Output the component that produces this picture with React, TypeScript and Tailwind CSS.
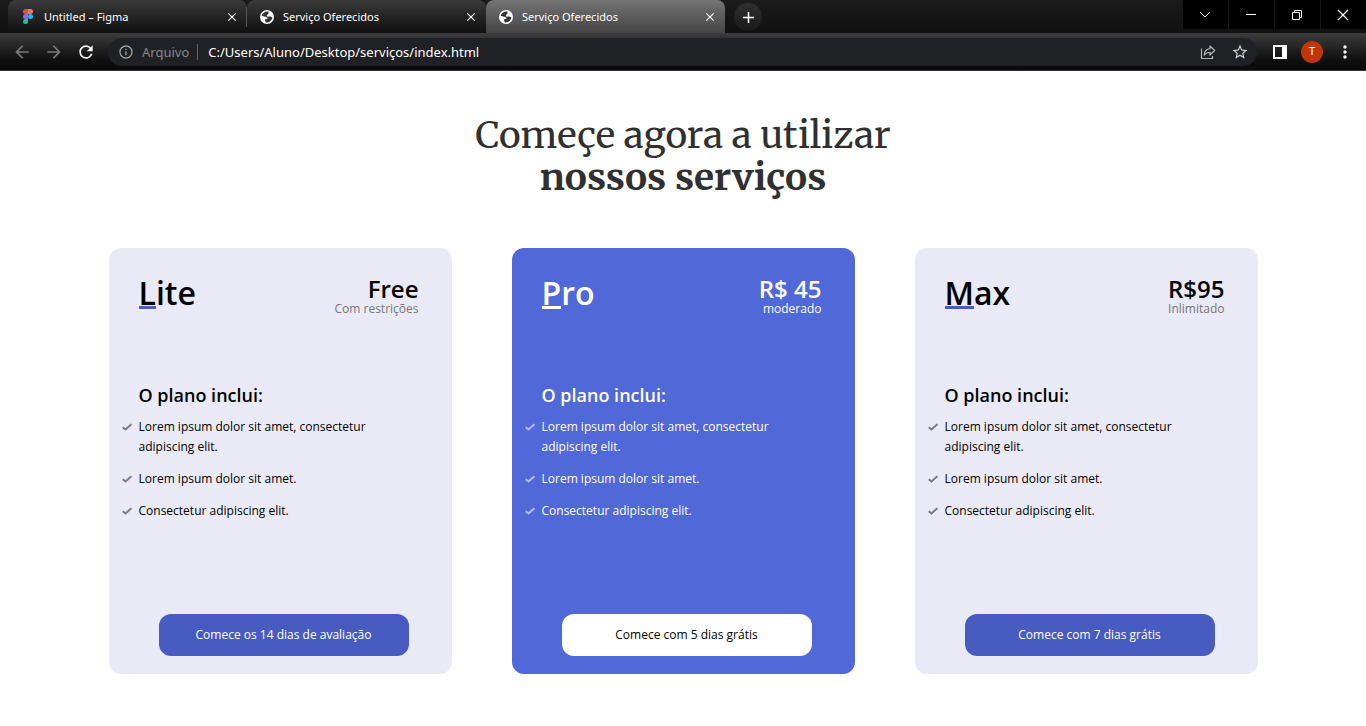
import { MdArrowBack, MdArrowForward, MdRefresh, MdInfoOutline, MdStarBorder, MdMoreVert, MdClose, MdAdd } from "react-icons/md";
import type { ReactNode } from "react";

function FigmaLogo() {
  return (
    <svg viewBox="0 0 20 30" className="h-[15px] w-[10px]" aria-hidden="true">
      <path d="M5 0h5v10H5A5 5 0 0 1 5 0z" fill="#f24e1e" />
      <path d="M10 0h5a5 5 0 0 1 0 10h-5z" fill="#ff7262" />
      <path d="M5 10h5v10H5a5 5 0 0 1 0-10z" fill="#a259ff" />
      <circle cx="15" cy="15" r="5" fill="#1abcfe" />
      <path d="M5 20h5v5a5 5 0 1 1-5-5z" fill="#0acf83" />
    </svg>
  );
}

function Globe() {
  return (
    <svg viewBox="0 0 14 14" className="size-[14px]" aria-hidden="true">
      <circle cx="7" cy="7" r="7" fill="#fff" />
      <path
        d="M8.600 1.600C5.500.9 2.400 2.800 1.600 5.800c1.200-.2 2.200.9 3.400.9 1.300 0 1.500.7 2.200 1.100.8.500.3 1.200-.6 1.300-.9.100-1.700.2-1.700 1 0 .9.900 1.200.8 2.300 3.400.5 6.300-1.800 6.700-5.200-1.100.3-1.400-.6-2.500-.6-.9 0-1.400.3-2.200.1-.8-.2-1-.8-.9-1.400.2-.8 1-.7 1.500-1.200.6-.6-.2-1.600.3-2.500z"
        fill="#333"
      />
    </svg>
  );
}

type TabProps = { title: string; icon: ReactNode; active?: boolean; divider?: boolean };

function Tab({ title, icon, active = false, divider = false }: TabProps) {
  return (
    <div
      className={
        active
          ? "flex h-full w-[239px] items-center rounded-t-lg bg-linear-to-b from-[#747474] to-[#454545] pr-[7px] pl-3"
          : "flex h-[33px] w-[239px] items-center rounded-t-lg rounded-b-md bg-linear-to-b from-[#3b3b3b] to-[#101010] pr-[7px] pl-3"
      }
    >
      <span className="flex w-4 shrink-0 justify-center text-white">{icon}</span>
      <span className="ml-2 flex-1 truncate text-[11px] leading-4 text-white">{title}</span>
      <button type="button" aria-label={`Fechar ${title}`} className="flex size-4 items-center justify-center text-white">
        <MdClose size={14} />
      </button>
      {divider && <span className="-mr-[7px] ml-[6px] h-5 w-px bg-[#555]" />}
    </div>
  );
}

function WindowControls() {
  const button = "flex h-full w-[46px] items-center justify-center border-l border-[#171717] bg-black pr-px text-white";
  return (
    <div className="ml-auto flex h-[29px]">
      <button type="button" aria-label="Pesquisar guias" className={button}>
        <svg width="12" height="12" viewBox="0 0 12 12" fill="none" stroke="currentColor"><path d="M1 3l5 5 5-5" /></svg>
      </button>
      <button type="button" aria-label="Minimizar" className={button}>
        <svg width="12" height="12" viewBox="0 0 12 12" fill="none" stroke="currentColor"><path d="M1 5.500h10" /></svg>
      </button>
      <button type="button" aria-label="Restaurar" className={button}>
        <svg width="12" height="12" viewBox="0 0 12 12" fill="none" stroke="currentColor"><path d="M1.500 3.500h7v7h-7zM3.500 3.500v-2h7v7h-2" /></svg>
      </button>
      <button type="button" aria-label="Fechar" className={button}>
        <svg width="12" height="12" viewBox="0 0 12 12" fill="none" stroke="currentColor" strokeWidth="1.3"><path d="M1 1l10 10M11 1L1 11" /></svg>
      </button>
    </div>
  );
}

function BrowserBar() {
  return (
    <header className="font-['Segoe_UI','Noto_Sans',sans-serif]">
      <div className="flex h-[33px] bg-linear-to-b from-[#1b1b1b] to-[#101010] pl-2">
        <Tab title="Untitled – Figma" icon={<FigmaLogo />} divider />
        <Tab title="Serviço Oferecidos" icon={<Globe />} />
        <Tab title="Serviço Oferecidos" icon={<Globe />} active />
        <button
          type="button"
          aria-label="Nova guia"
          className="mt-[3px] ml-[9px] flex size-7 items-center justify-center rounded-full bg-linear-to-b from-[#303030] to-[#181818] text-white"
        >
          <MdAdd size={19} />
        </button>
        <WindowControls />
      </div>
      <div className="flex h-[38px] items-center border-b border-[#333] bg-linear-to-b from-[#3c3c3c] from-0% via-[#0f0f0f] via-75% to-[#0a0a0a] pr-[11px] pl-3">
        <button type="button" aria-label="Voltar" className="text-[#777]"><MdArrowBack size={20} /></button>
        <button type="button" aria-label="Avançar" className="ml-3 text-[#777]"><MdArrowForward size={20} /></button>
        <button type="button" aria-label="Recarregar" className="ml-3 text-white"><MdRefresh size={20} /></button>
        <div className="ml-3 flex h-7 flex-1 items-center rounded-full bg-[#202124] pr-2 pl-[10px]">
          <MdInfoOutline size={16} className="text-[#9aa0a6]" />
          <label htmlFor="url" className="ml-2 border-r border-[#666] pr-2 text-[13px] leading-4 text-[#85888c]">Arquivo</label>
          <input
            id="url"
            defaultValue="C:/Users/Aluno/Desktop/serviços/index.html"
            className="ml-[10px] min-w-0 flex-1 bg-transparent text-[13px] leading-5 text-white outline-none"
          />
          <button type="button" aria-label="Compartilhar" className="text-[#b4b4b6]">
            <svg width="16" height="16" viewBox="0 0 16 16" fill="none" stroke="currentColor" strokeWidth="1.2">
              <path d="M1.500 4.500v10h11V12" />
              <path d="M4.200 11C4.500 7 6.300 5 10 4.600V2l4.700 4.500L10 11V8.300C7.500 8.300 5.700 9.200 4.200 11z" strokeLinejoin="round" />
            </svg>
          </button>
          <button type="button" aria-label="Favoritar" className="ml-[15px] text-[#d0d0d0]"><MdStarBorder size={18} /></button>
        </div>
        <button type="button" aria-label="Painel lateral" className="ml-4 text-white">
          <svg width="14" height="14" viewBox="0 0 14 14"><path fillRule="evenodd" fill="currentColor" d="M0 0h14v14H0zM2 2v10h7V2z" /></svg>
        </button>
        <button type="button" aria-label="Perfil" className="ml-[14px] flex size-[22px] items-center justify-center rounded-full bg-[#bf360c] text-[11px] text-white">T</button>
        <button type="button" aria-label="Mais opções" className="ml-3 text-white"><MdMoreVert size={20} /></button>
      </div>
    </header>
  );
}

type Plan = { name: string; price: string; note: string; action: string; featured?: boolean };

const plans: Plan[] = [
  { name: "Lite", price: "Free", note: "Com restrições", action: "Comece os 14 dias de avaliação" },
  { name: "Pro", price: "R$ 45", note: "moderado", action: "Comece com 5 dias grátis", featured: true },
  { name: "Max", price: "R$95", note: "Inlimitado", action: "Comece com 7 dias grátis" },
];

const features = [
  "Lorem ipsum dolor sit amet, consectetur adipiscing elit.",
  "Lorem ipsum dolor sit amet.",
  "Consectetur adipiscing elit.",
];

function PlanCard({ name, price, note, action, featured = false }: Plan) {
  return (
    <article
      className={
        featured
          ? "flex min-h-[426px] flex-col rounded-xl bg-[#5068d8] px-[30px] pt-6 pb-[18px] text-white"
          : "flex min-h-[426px] flex-col rounded-xl bg-[#eaeaf6] px-[30px] pt-6 pb-[18px] text-black"
      }
    >
      <div className="flex justify-between pr-[3px]">
        <h2 className="text-[32px] leading-[42px] font-semibold">
          <span className={featured ? "inline-block h-[37px] border-b-3 border-white" : "inline-block h-[37px] border-b-3 border-[#475bc0]"}>{name[0]}</span>
          {name.slice(1)}
        </h2>
        <div className="pt-1 text-right">
          <p className="text-2xl leading-[26px] font-semibold">{price}</p>
          <p className={featured ? "text-xs leading-[14px]" : "text-xs leading-[14px] text-[#777]"}>{note}</p>
        </div>
      </div>
      <h3 className="mt-[67px] text-lg leading-6 font-semibold">O plano inclui:</h3>
      <ul className="mt-[10px] flex flex-col gap-3 pr-6 text-xs leading-5">
        {features.map((feature) => (
          <li key={feature} className="-ml-[17px] flex">
            <svg viewBox="0 0 10 8" className={featured ? "mt-[6px] mr-[7px] h-2 w-[10px] shrink-0 text-[#b3bdf0]" : "mt-[6px] mr-[7px] h-2 w-[10px] shrink-0 text-[#7a7a82]"} fill="none" stroke="currentColor" strokeWidth="2" aria-hidden="true">
              <path d="M.7 4.200L3.500 6.500 9.400 1.200" />
            </svg>
            {feature}
          </li>
        ))}
      </ul>
      <button
        type="button"
        className={
          featured
            ? "mt-auto ml-5 h-[42px] w-[250px] rounded-xl bg-white text-xs text-black"
            : "mt-auto ml-5 h-[42px] w-[250px] rounded-xl bg-[#475bc0] text-xs text-white"
        }
      >
        {action}
      </button>
    </article>
  );
}

export default function App() {
  return (
    <div className="min-h-screen bg-white">
      <BrowserBar />
      <main className="mx-auto max-w-[1149px] pt-[43px] pb-12 font-['Open_Sans',sans-serif]">
        <h1 className="text-center font-['Merriweather','DejaVu_Serif',serif] text-[37px] leading-[42px] font-normal text-[#303030]">
          Começe agora a utilizar
          <br />
          <strong className="font-bold">nossos serviços</strong>
        </h1>
        <section className="mt-[50px] grid grid-cols-3 gap-[60px]">
          {plans.map((plan) => (
            <PlanCard key={plan.name} {...plan} />
          ))}
        </section>
      </main>
    </div>
  );
}
